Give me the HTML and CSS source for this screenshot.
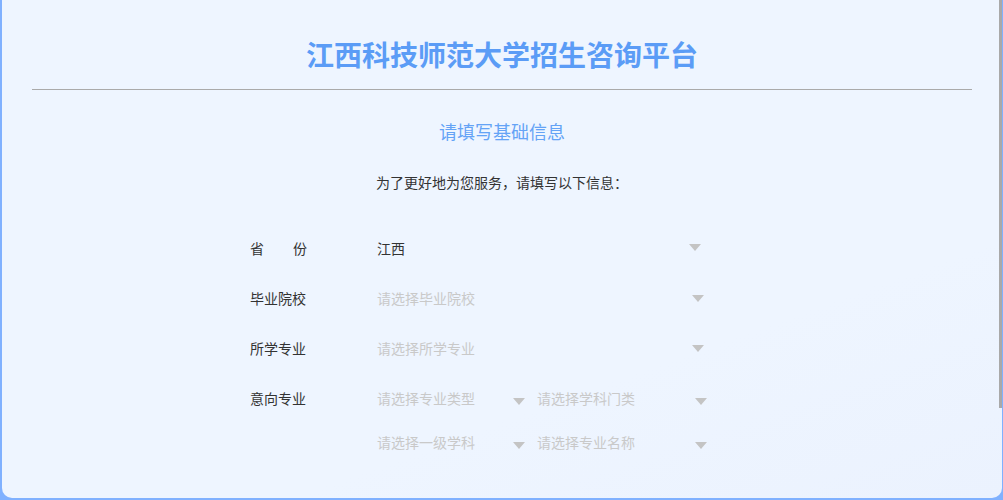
FILE: index.html
```html
<!DOCTYPE html>
<html lang="zh-CN">
<head>
    <meta charset="UTF-8">
    <meta name="viewport" content="width=device-width, initial-scale=1.0">
    <title>江西科技师范大学招生咨询平台</title>
    <link rel="stylesheet" href="styles.css">
</head>
<body>
    <div class="frame">
        <div class="panel">
            <h1 class="panel__title">江西科技师范大学招生咨询平台</h1>
            <hr class="panel__line">
            <h2 class="panel__subtitle">请填写基础信息</h2>
            <p class="panel__intro">为了更好地为您服务，请填写以下信息：</p>

            <div class="form">
                <div class="form__row">
                    <span class="form__label form__label--spread">省份</span>
                    <div class="select select--full select--short">
                        <span class="select__value">江西</span>
                        <i class="select__arrow"></i>
                    </div>
                </div>
                <div class="form__row">
                    <span class="form__label">毕业院校</span>
                    <div class="select select--full">
                        <span class="select__placeholder">请选择毕业院校</span>
                        <i class="select__arrow"></i>
                    </div>
                </div>
                <div class="form__row">
                    <span class="form__label">所学专业</span>
                    <div class="select select--full">
                        <span class="select__placeholder">请选择所学专业</span>
                        <i class="select__arrow"></i>
                    </div>
                </div>
                <div class="form__row form__row--group">
                    <span class="form__label">意向专业</span>
                    <div class="form__pairs">
                        <div class="form__pair">
                            <div class="select select--left">
                                <span class="select__placeholder">请选择专业类型</span>
                                <i class="select__arrow select__arrow--low"></i>
                            </div>
                            <div class="select select--right">
                                <span class="select__placeholder">请选择学科门类</span>
                                <i class="select__arrow select__arrow--low"></i>
                            </div>
                        </div>
                        <div class="form__pair">
                            <div class="select select--left">
                                <span class="select__placeholder">请选择一级学科</span>
                                <i class="select__arrow select__arrow--low"></i>
                            </div>
                            <div class="select select--right">
                                <span class="select__placeholder">请选择专业名称</span>
                                <i class="select__arrow select__arrow--low"></i>
                            </div>
                        </div>
                    </div>
                </div>
            </div>
        </div>
        <div class="frame__thumb"></div>
    </div>
</body>
</html>
```

FILE: styles.css
```css
html, body {
    margin: 0;
    height: 100%;
}

body {
    background-color: #80b1ff;
    font-family: "Noto Sans CJK SC", "Noto Sans", sans-serif;
    overflow: hidden;
}

.frame {
    position: relative;
    margin-left: 2px;
    width: 1000px;
    height: 498px;
    border-radius: 0 0 10px 10px;
    overflow: hidden;
    background: linear-gradient(160deg, #eef5ff 0%, #eef5ff 70%, #ebf2fe 100%);
}

.frame__thumb {
    position: absolute;
    top: 0;
    right: 0;
    width: 3px;
    height: 408px;
    background-color: #a9a9a9;
}

.panel {
    box-sizing: border-box;
    height: 100%;
    padding: 34px 30px 145px;
    overflow-y: auto;
    scrollbar-width: none;
}

.panel__title {
    margin: 0;
    height: 40px;
    line-height: 40px;
    text-align: center;
    font-size: 28px;
    font-weight: bold;
    color: #5b9cf6;
}

.panel__line {
    margin: 15px 0 0;
    border: none;
    border-top: 1px solid #aaaaaa;
}

.panel__subtitle {
    margin: 29px 0 0;
    line-height: 24px;
    text-align: center;
    font-size: 18px;
    font-weight: normal;
    color: #64a3f6;
}

.panel__intro {
    margin: 29px 0 0;
    line-height: 20px;
    text-align: center;
    font-size: 14px;
    color: #333;
}

.form {
    margin: 36px 0 0 218px;
    display: flex;
    flex-direction: column;
    gap: 10px;
}

.form__row {
    display: flex;
    align-items: center;
    height: 40px;
}

.form__row--group {
    height: auto;
    align-items: flex-start;
}

.form__row--group .form__label {
    line-height: 40px;
}

.form__label {
    width: 127px;
    flex-shrink: 0;
    font-size: 14px;
    color: #333;
}

.form__label--spread {
    width: 57px;
    margin-right: 70px;
    text-align: justify;
    text-align-last: justify;
}

.form__pairs {
    display: flex;
    flex-direction: column;
    gap: 4px;
}

.form__pair {
    display: flex;
    gap: 10px;
}

.select {
    position: relative;
    height: 40px;
    line-height: 40px;
    font-size: 14px;
}

.select--full {
    width: 329px;
}

.select--short .select__arrow {
    right: 5px;
    top: 16px;
}

.select--left {
    width: 150px;
}

.select--right {
    width: 172px;
}

.select__value {
    color: #333;
}

.select__placeholder {
    color: #c9c9c9;
}

.select__arrow {
    position: absolute;
    right: 2px;
    top: 17px;
    width: 0;
    height: 0;
    border-left: 6px solid transparent;
    border-right: 6px solid transparent;
    border-top: 7px solid #c4c4c4;
}

.select__arrow--low {
    top: 20px;
}
```
